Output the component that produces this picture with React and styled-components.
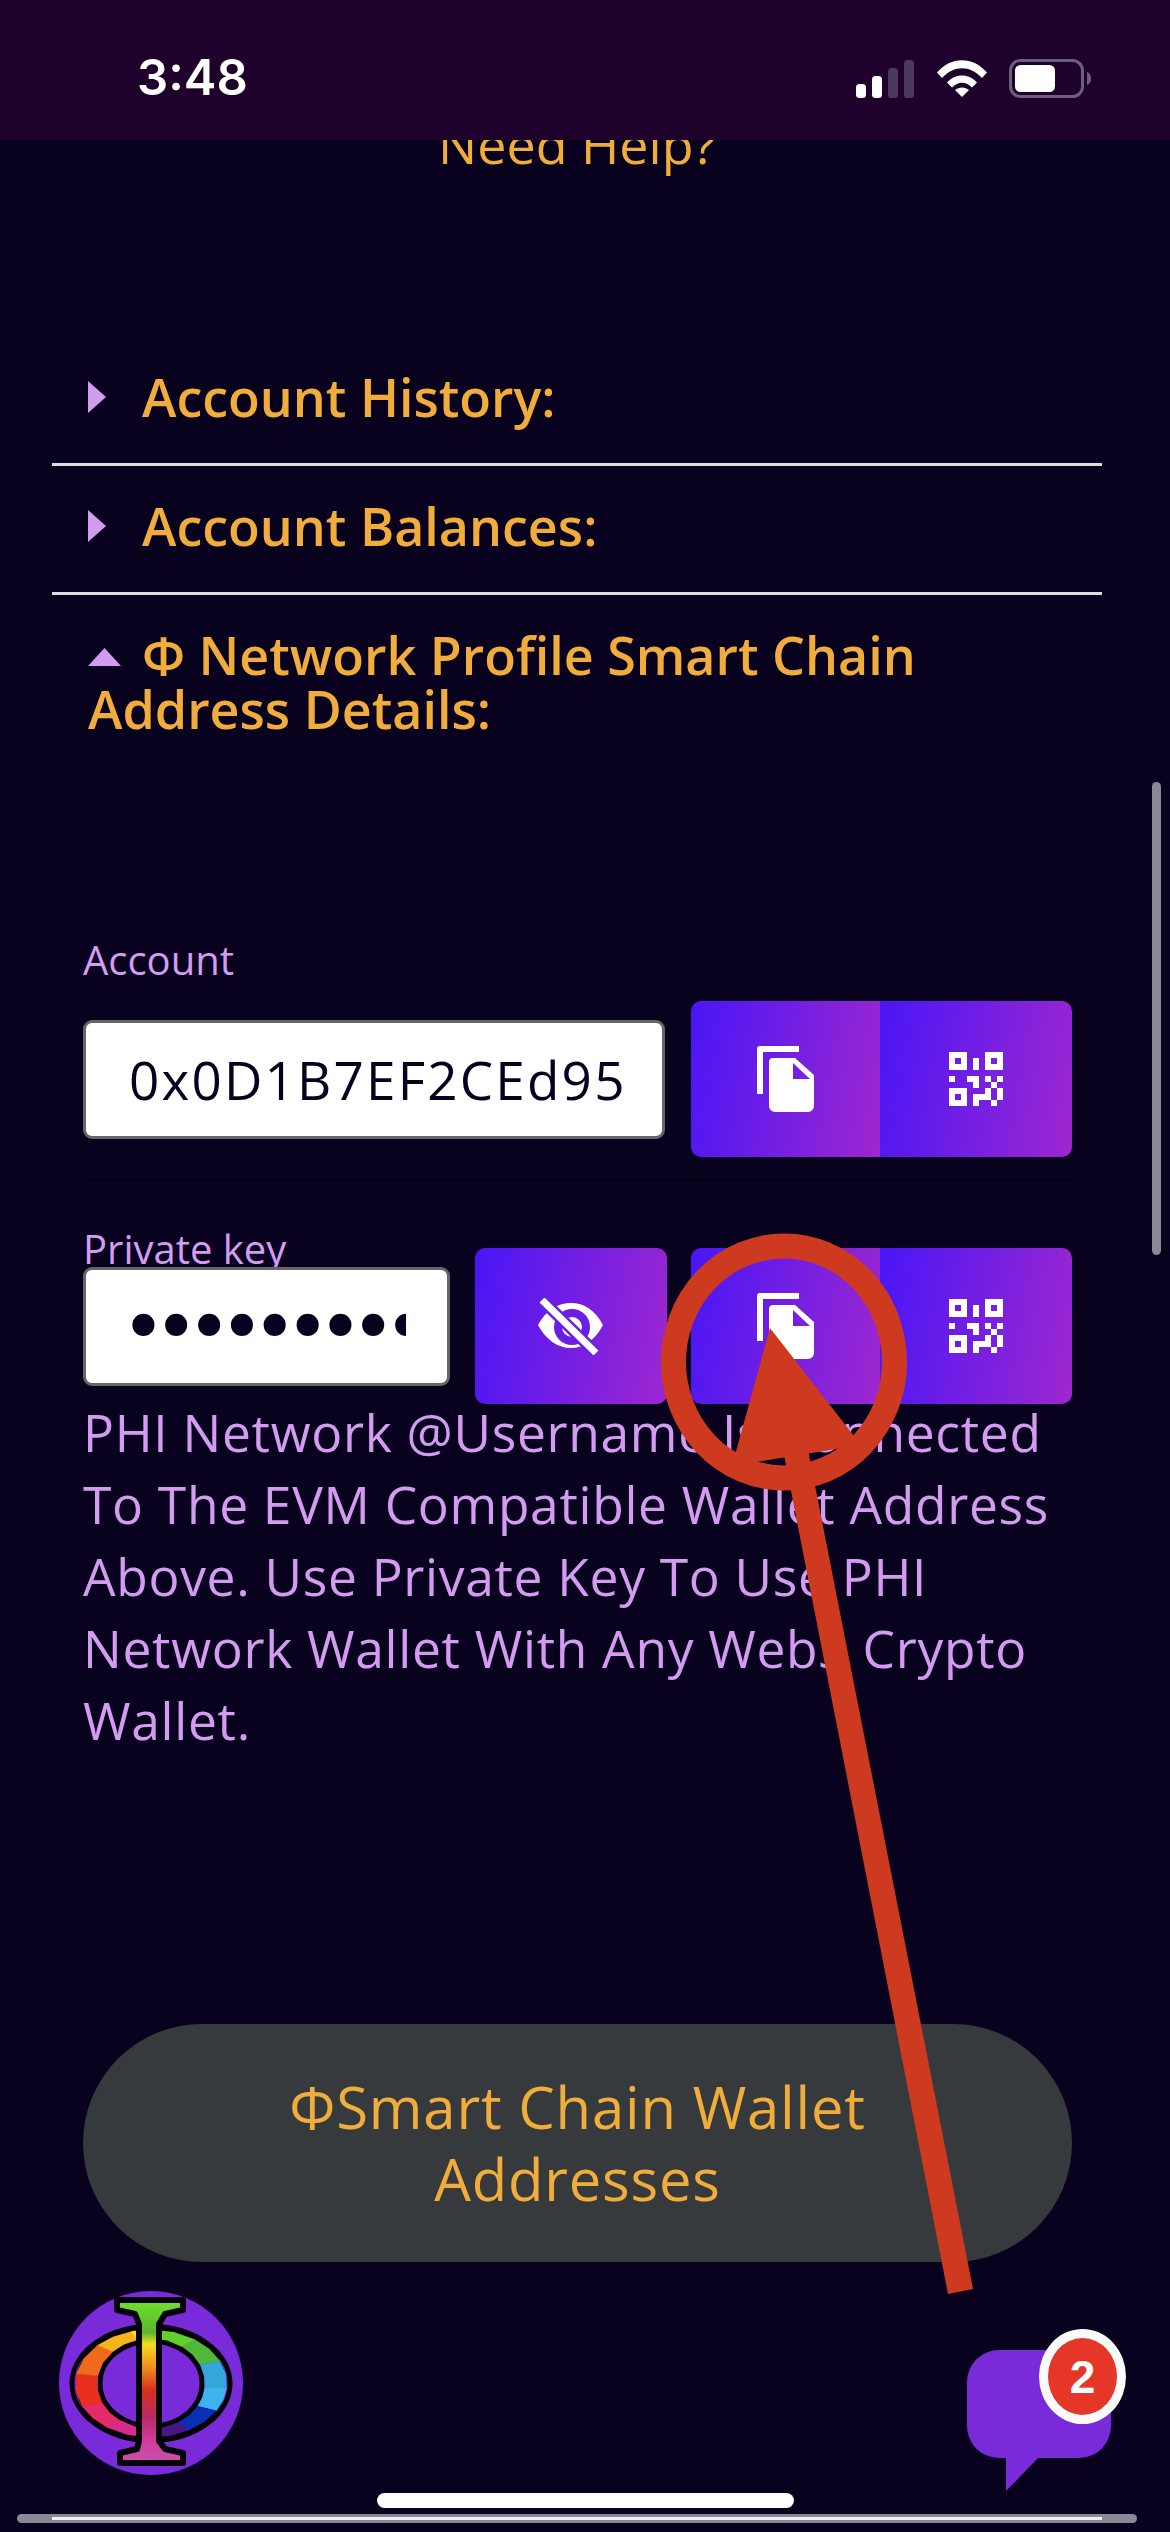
import React from 'react';
import styled, { createGlobalStyle } from 'styled-components';

const GOLD = '#f1ad3c';
const LILAC = '#d49cf1';
const BG = '#09021f';
const FONT = '"Open Sans", "Noto Sans", sans-serif';

const GlobalStyle = createGlobalStyle`
  html, body {
    margin: 0;
    padding: 0;
    background: ${BG};
  }
  * { box-sizing: border-box; }
`;

const Page = styled.div`
  position: relative;
  width: 1170px;
  height: 2532px;
  overflow: hidden;
  background: ${BG};
  font-family: ${FONT};
`;

const StatusBar = styled.header`
  position: relative;
  z-index: 2;
  height: 140px;
  background: #1e022b;
  display: flex;
  align-items: flex-start;
  justify-content: space-between;
  padding: 58px 79px 0 137px;
`;

const Clock = styled.span`
  font-family: Inter, sans-serif;
  font-weight: 600;
  font-size: 49px;
  line-height: 40px;
  letter-spacing: 0;
  color: #fff;
`;

const Content = styled.main`
  padding: 0 68px 0 52px;
`;

const HelpLink = styled.div`
  margin-top: -32px;
  margin-bottom: 157px;
  text-align: center;
  color: ${GOLD};
  font-size: 52px;
  line-height: 72px;
`;

const Section = styled.section`
  padding: 33px 0 39px 36px;
  border-bottom: ${(p) => (p.$last ? 'none' : '3px solid #dcdce0')};
`;

const SectionTitle = styled.h3`
  margin: 0;
  color: ${GOLD};
  font-size: 52px;
  font-weight: 600;
  line-height: 54px;
`;

const Marker = styled.span`
  display: inline-block;
  background: ${LILAC};
  width: ${(p) => (p.$open ? '33px' : '18px')};
  height: ${(p) => (p.$open ? '18px' : '32px')};
  margin-right: ${(p) => (p.$open ? '21px' : '36px')};
  vertical-align: ${(p) => (p.$open ? '9px' : '4px')};
  clip-path: ${(p) =>
    p.$open ? 'polygon(50% 0, 100% 100%, 0 100%)' : 'polygon(0 0, 100% 50%, 0 100%)'};
`;

const Panel = styled.div`
  margin: 0 30px 0 31px;
`;

const Wallet = styled.div`
  margin-top: ${(p) => p.$top}px;
`;

const FieldLabel = styled.label`
  display: block;
  color: ${LILAC};
  font-size: 40px;
  line-height: 52px;
`;

const FieldRow = styled.div`
  display: flex;
  align-items: center;
  justify-content: space-between;
  margin-top: ${(p) => p.$top}px;
  height: 156px;
`;

const KeyInput = styled.input`
  position: relative;
  width: 582px;
  height: 119px;
  padding: 0 20px 0 43px;
  border: 3px solid #666;
  border-radius: 9px;
  background: #fff;
  color: ${BG};
  font-family: ${FONT};
  font-size: 53px;
  letter-spacing: 2.2px;
  outline: none;
`;

const SecretInput = styled(KeyInput)`
  width: 367px;
  padding: 0 41px 0 35px;
  font-family: "DejaVu Sans", sans-serif;
  font-size: 76px;
  letter-spacing: -12px;
`;

const IconButton = styled.button`
  display: flex;
  align-items: center;
  justify-content: center;
  width: ${(p) => p.$width}px;
  height: 156px;
  padding: 0;
  border: none;
  border-radius: ${(p) => (p.$grouped ? '0' : '10px')};
  background: linear-gradient(100deg, #4916f6 0%, #9e27cf 100%);
`;

const ButtonGroup = styled.div`
  display: flex;
  border-radius: 10px;
  overflow: hidden;
`;

const Divider = styled.hr`
  margin: 22px 0 0;
  border: none;
  height: 2px;
  background: #03000f;
`;

const Note = styled.p`
  margin: -8px 0 0;
  color: ${LILAC};
  font-size: 51.500px;
  letter-spacing: 0.7px;
  line-height: 72px;
`;

const PillButton = styled.button`
  display: block;
  width: 989px;
  height: 238px;
  margin-top: 268px;
  padding: 0 100px;
  border: none;
  border-radius: 119px;
  background: #373a3d;
  color: ${GOLD};
  font-family: ${FONT};
  font-size: 58px;
  letter-spacing: 0.8px;
  line-height: 72px;
`;

const LogoBadge = styled.svg`
  position: absolute;
  left: 59px;
  top: 2291px;
`;

const ChatWidget = styled.div`
  position: absolute;
  left: 967px;
  top: 2350px;
  width: 144px;
  height: 141px;
`;

const ChatCount = styled.span`
  position: absolute;
  left: 72px;
  top: -21px;
  width: 87px;
  height: 95px;
  display: flex;
  align-items: center;
  justify-content: center;
  border: 9px solid #fbfbfc;
  border-radius: 50%;
  background: #e63627;
  color: #fff;
  font-family: "Liberation Sans", sans-serif;
  font-weight: 700;
  font-size: 46px;
`;

const HomeBar = styled.div`
  position: absolute;
  left: 377px;
  top: 2493px;
  width: 417px;
  height: 15px;
  border-radius: 8px;
  background: #fff;
`;

const HScroll = styled.div`
  position: absolute;
  left: 17px;
  top: 2514px;
  width: 1120px;
  height: 9px;
  border-radius: 5px;
  background: #8a8896;
  &::after {
    content: '';
    position: absolute;
    left: 35px;
    top: 3px;
    width: 1050px;
    height: 3px;
    background: #f0f0f2;
  }
`;

const VScroll = styled.div`
  position: absolute;
  left: 1152px;
  top: 782px;
  width: 9px;
  height: 473px;
  border-radius: 5px;
  background: #8a8896;
`;

const Annotation = styled.svg`
  position: absolute;
  left: 0;
  top: 0;
  pointer-events: none;
`;

const StatusIcons = styled.div`
  display: flex;
  align-items: center;
  gap: 23px;
  margin-top: 1px;
  & > svg:last-child { margin-left: -1px; }
`;

const SignalIcon = () => (
  <svg width="58" height="38" viewBox="0 0 58 38">
    <rect x="0" y="24" width="10" height="14" rx="3.5" fill="#fff" />
    <rect x="16" y="16" width="10" height="22" rx="3.5" fill="#fff" />
    <rect x="32" y="8" width="10" height="30" rx="3.5" fill="#4b3a5c" />
    <rect x="48" y="0" width="10" height="38" rx="3.5" fill="#4b3a5c" />
  </svg>
);

const WifiIcon = () => (
  <svg width="50" height="37" viewBox="0 0 50 37">
    <path d="M0 12.5C14 -4 36 -4 50 12.5L45 18C33 5 17 5 5 18Z" fill="#fff" />
    <path d="M10 22.5C18 13 32 13 40 22.5L35 27.5C29 21 21 21 15 27.5Z" fill="#fff" />
    <path d="M18 30C22 26.5 28 26.5 32 30L25 37Z" fill="#fff" />
  </svg>
);

const BatteryIcon = () => (
  <svg width="82" height="39" viewBox="0 0 82 39">
    <rect x="1.5" y="1.5" width="72" height="36" rx="10" fill="none" stroke="#6d5e7b" strokeWidth="3" />
    <rect x="6" y="6" width="40" height="27" rx="5.5" fill="#fff" />
    <path d="M78 13c3 1 4 3.500 4 6.500s-1 5.500-4 6.500Z" fill="#6d5e7b" />
  </svg>
);

const CopyIcon = () => (
  <svg width="57" height="66" viewBox="0 0 57 66" fill="#fff">
    <path d="M3 0H42V6H6V48H0V3A3 3 0 0 1 3 0Z" />
    <path
      fillRule="evenodd"
      d="M16 12H38L57 29V60A6 6 0 0 1 51 66H18A6 6 0 0 1 12 60V16A4 4 0 0 1 16 12ZM36 17V33H53Z"
    />
  </svg>
);

// 9x9 modules, one string per row
const QR_ROWS = [
  '111000111',
  '101010101',
  '111010111',
  '000000000',
  '100110101',
  '000010010',
  '111000101',
  '101011101',
  '111010010',
];

const QrIcon = () => (
  <svg width="54" height="54" viewBox="0 0 9 9" fill="#fff" shapeRendering="crispEdges">
    {QR_ROWS.flatMap((row, y) =>
      row.split('').map((cell, x) =>
        cell === '1' ? <rect key={`${x}-${y}`} x={x} y={y} width="1" height="1" /> : null
      )
    )}
  </svg>
);

const EyeOffIcon = () => (
  <svg width="65" height="57" viewBox="0 0 65 57">
    <path d="M0 27C8 12 20 5 33 5S57 12 65 27C57 42 46 50 33 50S8 42 0 27Z" fill="#fff" />
    <circle cx="34" cy="29" r="14" fill="none" stroke="#6b1fe4" strokeWidth="8" />
    <path d="M4 2L58 55" stroke="#6a1fe5" strokeWidth="12" />
    <path d="M4 2L58 55" stroke="#fff" strokeWidth="7" />
  </svg>
);

const RING_STOPS = [
  [0, '#63cf2d'],
  [35, '#4fb838'],
  [65, '#36a6d8'],
  [95, '#3db4ee'],
  [120, '#0a2fb4'],
  [150, '#4a1684'],
  [180, '#d42c8c'],
  [215, '#e52a6a'],
  [245, '#e9301f'],
  [280, '#ef6a1c'],
  [315, '#f4b51c'],
  [345, '#f6e21e'],
  [360, '#f6e21e'],
];

const ellipsePoint = (deg, rx, ry) => {
  const a = (deg * Math.PI) / 180;
  return `${(92 + rx * Math.sin(a)).toFixed(1)},${(92.5 - ry * Math.cos(a)).toFixed(1)}`;
};

const LogoIcon = () => (
  <LogoBadge width="184" height="184" viewBox="0 0 184 184">
    <defs>
      <linearGradient id="stemFill" x1="0" y1="0" x2="0" y2="1">
        <stop offset="0" stopColor="#6fe22c" />
        <stop offset="0.2" stopColor="#5cb52c" />
        <stop offset="0.27" stopColor="#f5dc20" />
        <stop offset="0.42" stopColor="#ee8a1e" />
        <stop offset="0.55" stopColor="#d8301c" />
        <stop offset="0.72" stopColor="#b62a66" />
        <stop offset="0.85" stopColor="#d23a9c" />
        <stop offset="1" stopColor="#c553ae" />
      </linearGradient>
    </defs>
    <circle cx="92" cy="92" r="92" fill="#7a2bd9" />
    <ellipse cx="92" cy="92.500" rx="65" ry="49.500" fill="none" stroke="#050208" strokeWidth="20" />
    <ellipse cx="92" cy="92.500" rx="51" ry="42.500" fill="#7a2bd9" stroke="#050208" strokeWidth="5" />
    <ellipse cx="92" cy="92.500" rx="79" ry="57" fill="none" stroke="#050208" strokeWidth="5" />
    {RING_STOPS.slice(0, -1).map(([from, color], i) => {
      const to = RING_STOPS[i + 1][0];
      const mid = (from + to) / 2;
      const pts = [
        ellipsePoint(from, 76, 54),
        ellipsePoint(mid, 76, 54),
        ellipsePoint(to + 0.5, 76, 54),
        ellipsePoint(to + 0.5, 54, 45),
        ellipsePoint(mid, 54, 45),
        ellipsePoint(from, 54, 45),
      ];
      return <polygon key={from} points={pts.join(' ')} fill={color} />;
    })}
    <path
      d="M58 9H124V19L106 23L100 33V150L106 158L124 162V172H61V162L78 158L80 150V33L76 23L58 19Z"
      fill="url(#stemFill)"
      stroke="#050208"
      strokeWidth="6"
      strokeLinejoin="round"
    />
  </LogoBadge>
);

const ChatBubble = () => (
  <svg width="144" height="141" viewBox="0 0 144 141">
    <path
      d="M32 0H112A32 32 0 0 1 144 32V76A32 32 0 0 1 112 108H71L39 141V108H32A32 32 0 0 1 0 76V32A32 32 0 0 1 32 0Z"
      fill="#7a2bd9"
    />
  </svg>
);

const RedArrow = () => (
  <Annotation width="1170" height="2532" viewBox="0 0 1170 2532">
    <path d="M770 1328L861 1445L732 1466Z" fill="#cd3a20" />
    <path d="M783 1450L808 1450L973 2289L948 2294Z" fill="#cd3a20" />
    <ellipse cx="784" cy="1362" rx="110.500" ry="116" fill="none" stroke="#cd3a20" strokeWidth="25" />
  </Annotation>
);

export default function App() {
  return (
    <Page>
      <GlobalStyle />
      <StatusBar>
        <Clock>3:48</Clock>
        <StatusIcons>
          <SignalIcon />
          <WifiIcon />
          <BatteryIcon />
        </StatusIcons>
      </StatusBar>

      <Content>
        <HelpLink>Need Help?</HelpLink>

        <Section>
          <SectionTitle><Marker />Account History:</SectionTitle>
        </Section>
        <Section>
          <SectionTitle><Marker />Account Balances:</SectionTitle>
        </Section>
        <Section $last>
          <SectionTitle>
            <Marker $open />Φ Network Profile Smart Chain Address Details:
          </SectionTitle>
        </Section>

        <Panel>
          <Wallet $top={159}>
            <FieldLabel>Account</FieldLabel>
            <FieldRow $top={15}>
              <KeyInput readOnly value="0x0D1B7EF2CEd95" />
              <ButtonGroup>
                <IconButton $width={189} $grouped><CopyIcon /></IconButton>
                <IconButton $width={192} $grouped><QrIcon /></IconButton>
              </ButtonGroup>
            </FieldRow>
            <Divider />
          </Wallet>
          <Wallet $top={42}>
            <FieldLabel>Private key</FieldLabel>
            <FieldRow $top={-27}>
              <SecretInput type="password" readOnly value="abcdefghijklmnopqrstuvwx" />
              <IconButton $width={192}><EyeOffIcon /></IconButton>
              <ButtonGroup>
                <IconButton $width={189} $grouped><CopyIcon /></IconButton>
                <IconButton $width={192} $grouped><QrIcon /></IconButton>
              </ButtonGroup>
            </FieldRow>
          </Wallet>
          <Note>
            PHI Network @Username Is Connected To The EVM Compatible Wallet Address Above. Use Private
            Key To Use PHI Network Wallet With Any Web3 Crypto Wallet.
          </Note>
          <PillButton>ΦSmart Chain Wallet Addresses</PillButton>
        </Panel>
      </Content>

      <LogoIcon />
      <ChatWidget>
        <ChatBubble />
        <ChatCount>2</ChatCount>
      </ChatWidget>
      <VScroll />
      <HomeBar />
      <HScroll />
      <RedArrow />
    </Page>
  );
}
